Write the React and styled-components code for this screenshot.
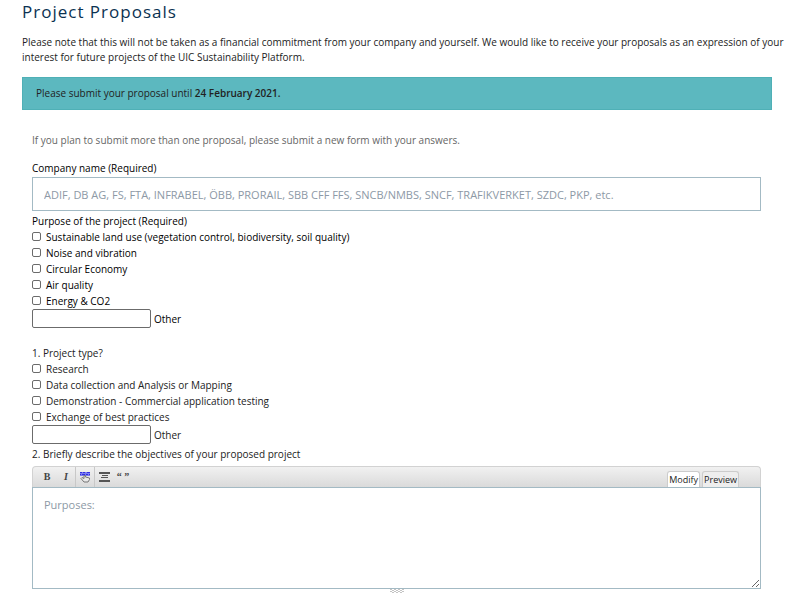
import { useState } from "react";
import styled, { createGlobalStyle } from "styled-components";

const GlobalStyle = createGlobalStyle`
  * {
    box-sizing: border-box;
  }
  body {
    margin: 0;
    background: #fff;
    color: #222;
    font-family: "Open Sans", sans-serif;
    font-size: 10px;
    line-height: 16px;
  }
`;

const Page = styled.main`
  padding: 0 28px 0 22px;
`;

const Title = styled.h1`
  margin: 0;
  color: #0b3252;
  font-size: 17px;
  font-weight: 500;
  line-height: 24px;
  letter-spacing: 1px;
`;

const Intro = styled.p`
  margin: 11px -16px 12px 0;
  line-height: 15px;
`;

const Notice = styled.div`
  padding: 7px 13px 8px;
  border: 1px solid #4fb0b6;
  background: #5cb8bf;

  strong {
    font-weight: 600;
  }
`;

const Form = styled.form`
  padding: 22px 11px 0 10px;
`;

const Note = styled.p`
  margin: 0 0 12px;
  color: #666;
`;

const Label = styled.label`
  display: block;
  color: ${(props) => (props.$strong ? "#000" : "#222")};
  font-weight: ${(props) => (props.$strong ? 500 : 400)};
`;

const TextInput = styled.input`
  display: block;
  width: 100%;
  height: 34px;
  margin: 1px 0 2px;
  padding: 0 11px;
  border: 1px solid #a3bac4;
  font: inherit;
  font-size: 11px;

  &::placeholder {
    color: #8d99a6;
  }
`;

const Group = styled.fieldset`
  margin: 0 0 ${(props) => (props.$spaced ? "17px" : "2px")};
  padding: 0;
  border: 0;
  color: ${(props) => (props.$strong ? "#000" : "#222")};
  font-weight: ${(props) => (props.$strong ? 500 : 400)};
`;

const Legend = styled.legend`
  padding: 0;
`;

const Choice = styled.label`
  display: flex;
  align-items: center;
  gap: 5px;
`;

const Checkbox = styled.input`
  appearance: none;
  width: 9px;
  height: 9px;
  margin: 0 0 2px;
  border: 1px solid #6b6b6b;
  border-radius: 2px;
  background: #fff;

  &:checked {
    background: #0b5fa5;
  }
`;

const Other = styled.label`
  display: flex;
  align-items: center;
  gap: 3px;
`;

const OtherInput = styled.input`
  width: 119px;
  height: 19px;
  border: 1px solid #6b6b6b;
  border-radius: 2px;
  font: inherit;
`;

const Toolbar = styled.div`
  display: flex;
  justify-content: space-between;
  height: 21px;
  margin-top: 4px;
  padding: 0 21px 0 5px;
  border: 1px solid #d2d2d2;
  border-bottom: 0;
  border-radius: 4px 4px 0 0;
  background: linear-gradient(#f1f1f1, #dadada);
`;

const Tools = styled.div`
  display: flex;
`;

const Tool = styled.button`
  display: flex;
  align-items: center;
  justify-content: center;
  width: 19px;
  padding: 0;
  border: 0;
  border-right: 1px solid ${(props) => (props.$divider ? "#c8c8c8" : "transparent")};
  background: none;
  color: #444;
  font: ${(props) => (props.$italic ? "italic" : "normal")} bold 10px/16px
    "Liberation Serif", serif;
`;

const Tabs = styled.div`
  display: flex;
  align-items: flex-end;
  gap: 2px;
`;

const Tab = styled.button`
  height: 16px;
  padding: 0 1px;
  border: 1px solid #ccc;
  border-bottom: 0;
  border-radius: 3px 3px 0 0;
  background: ${(props) => (props.$active ? "#fff" : "#eee")};
  color: #222;
  font: 9px/14px "Open Sans", sans-serif;
`;

const Editor = styled.textarea`
  display: block;
  width: 100%;
  height: 102px;
  padding: 9px 11px;
  border: 1px solid #a3bac4;
  font: inherit;
  font-size: 11px;
  resize: vertical;

  &::placeholder {
    color: #8d99a6;
  }
`;

const Grip = styled.svg`
  display: block;
  margin: 0 auto;
`;

const purposes = [
  "Sustainable land use (vegetation control, biodiversity, soil quality)",
  "Noise and vibration",
  "Circular Economy",
  "Air quality",
  "Energy & CO2",
];

const projectTypes = [
  "Research",
  "Data collection and Analysis or Mapping",
  "Demonstration - Commercial application testing",
  "Exchange of best practices",
];

const LinkIcon = () => (
  <svg width="12" height="12" viewBox="0 0 12 12">
    <rect x="1" y="1" width="10" height="4" fill="#7b7bf0" />
    <path d="M1 1.5h2M4 1.5h2M8 1.5h3M1 3.5h1M3 3.5h3M7 3.5h2M10 3.5h1" stroke="#3030e0" />
    <path
      d="M5 4.5v3L3 6.5 2 7.5l3 3.5h4l1.5-2.5V7L6.5 6V4.5z"
      fill="#e8e8e8"
      stroke="#777"
    />
  </svg>
);

const CenterIcon = () => (
  <svg width="11" height="10" viewBox="0 0 11 10">
    <path d="M0 1h11M0 9h11" stroke="#555" strokeWidth="2" />
    <path d="M3 3.5h6M2 5.5h7" stroke="#555" />
  </svg>
);

const CheckGroup = ({ title, name, options, strong, spaced }) => (
  <Group $strong={strong} $spaced={spaced}>
    <Legend>{title}</Legend>
    {options.map((option) => (
      <Choice key={option}>
        <Checkbox type="checkbox" name={name} value={option} />
        {option}
      </Choice>
    ))}
    <Other>
      <OtherInput type="text" name={`${name}_other`} />
      Other
    </Other>
  </Group>
);

export default function App() {
  const [tab, setTab] = useState("Modify");

  return (
    <>
      <GlobalStyle />
      <Page>
        <Title>Project Proposals</Title>
        <Intro>
          Please note that this will not be taken as a financial commitment from
          your company and yourself. We would like to receive your proposals as
          an expression of your interest for future projects of the UIC
          Sustainability Platform.
        </Intro>
        <Notice>
          Please submit your proposal until <strong>24 February 2021.</strong>
        </Notice>
        <Form>
          <Note>
            If you plan to submit more than one proposal, please submit a new
            form with your answers.
          </Note>
          <Label htmlFor="company" $strong>
            Company name (Required)
          </Label>
          <TextInput
            id="company"
            type="text"
            placeholder="ADIF, DB AG, FS, FTA, INFRABEL, ÖBB, PRORAIL, SBB CFF FFS, SNCB/NMBS, SNCF, TRAFIKVERKET, SZDC, PKP, etc."
          />
          <CheckGroup
            title="Purpose of the project (Required)"
            name="purpose"
            options={purposes}
            strong
            spaced
          />
          <CheckGroup title="1. Project type?" name="type" options={projectTypes} />
          <Label htmlFor="objectives">
            2. Briefly describe the objectives of your proposed project
          </Label>
          <Toolbar>
            <Tools>
              <Tool type="button">B</Tool>
              <Tool type="button" $italic $divider>
                I
              </Tool>
              <Tool type="button" $divider>
                <LinkIcon />
              </Tool>
              <Tool type="button">
                <CenterIcon />
              </Tool>
              <Tool type="button">“ ”</Tool>
            </Tools>
            <Tabs>
              {["Modify", "Preview"].map((item) => (
                <Tab
                  key={item}
                  type="button"
                  $active={tab === item}
                  onClick={() => setTab(item)}
                >
                  {item}
                </Tab>
              ))}
            </Tabs>
          </Toolbar>
          <Editor id="objectives" placeholder="Purposes:" />
          <Grip width="14" height="4" viewBox="0 0 14 4">
            <path d="M0 .5h14M2 1.5h12M0 2.5h14M2 3.5h10" stroke="#c4c4c4" strokeDasharray="2 2" />
          </Grip>
        </Form>
      </Page>
    </>
  );
}
